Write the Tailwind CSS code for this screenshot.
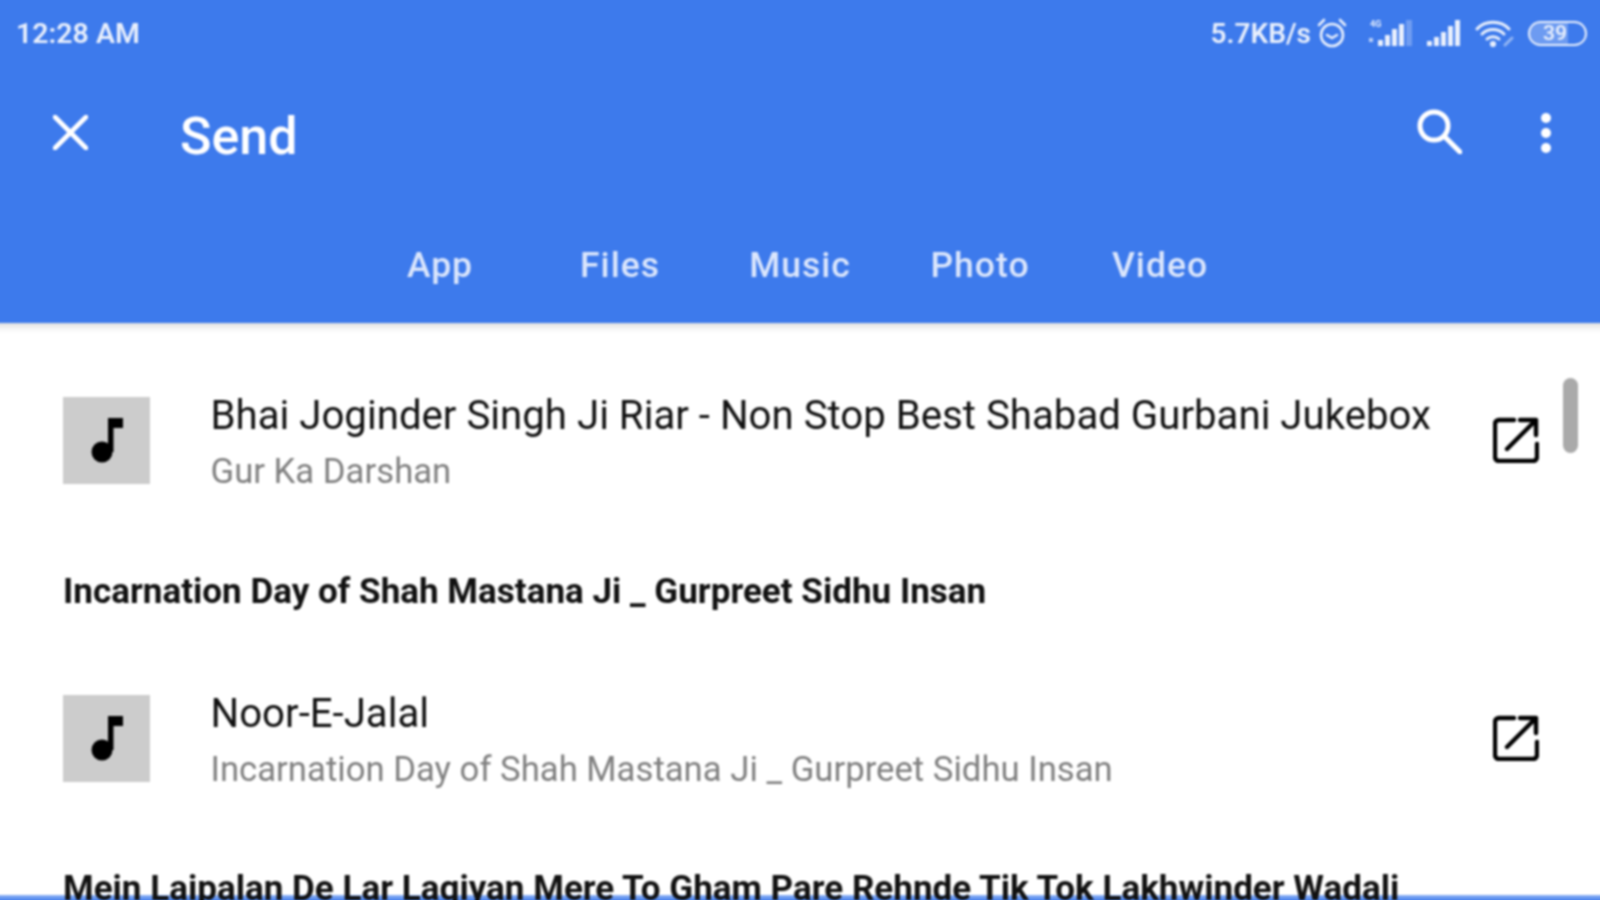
<!DOCTYPE html>
<html><head><meta charset="utf-8"><script src="https://cdn.jsdelivr.net/npm/@tailwindcss/browser@4"></script></head>
<body class="m-0 bg-white">
<div class="w-[1600px] h-[900px] overflow-hidden bg-white">
<div class="relative w-[1640px] h-[940px] -ml-[20px] -mt-[20px] overflow-hidden bg-white font-['Roboto',sans-serif] blur-[0.8px]">
  <div class="absolute left-0 right-0 top-[915px] h-[25px] bg-gradient-to-b from-[#8fb2f4] to-[#3d7aec] to-[25%]"></div>
  <header class="relative z-20 h-[343px] pt-[20px] px-[20px] bg-[#3d7aec] text-white shadow-[0_3px_8px_rgba(0,0,0,0.16)]">
    <div class="h-[66px] flex items-center justify-between pl-4 pr-[13px] pt-[2px] text-[#e8effc]">
      <span class="text-[28.5px] font-semibold">12:28 AM</span>
      <div class="flex items-center">
        <span class="text-[28px] font-semibold mr-[6px]">5.7KB/s</span>
        <svg class="w-[30px] h-[30px] mr-[21px] -mt-[2px]" viewBox="0 0 30 30" fill="none" stroke="currentColor" stroke-width="2.6" stroke-linecap="round"><circle cx="15" cy="17" r="11"/><path d="M10 17l5 3 5-3M2 7l5-5M28 7l-5-5"/></svg>
        <svg class="w-[47px] h-[28px] mr-[11px] -mt-[2px]" viewBox="0 0 47 28"><text x="2" y="8" font-size="9" font-weight="700" fill="currentColor">4G</text><rect x="1" y="19" width="4" height="4" fill="currentColor" opacity=".7"/><rect x="10" y="21" width="5" height="6" fill="currentColor"/><rect x="17" y="16" width="5" height="11" fill="currentColor"/><rect x="24" y="10" width="5" height="17" fill="currentColor"/><rect x="31" y="5" width="5" height="22" fill="currentColor"/><rect x="38" y="1" width="6" height="26" fill="currentColor" opacity=".3"/></svg>
        <svg class="w-[36px] h-[26px] mr-[13px] -mt-[2px]" viewBox="0 0 36 26" fill="currentColor"><path d="M1 21h5v5H1zM8 17h5v9H8zM15 12h5v14h-5zM22 6h5v20h-5zM29 0h5v26h-5z"/></svg>
        <svg class="w-[40px] h-[27px] mr-[13px] -mt-[2px]" viewBox="0 0 40 27" fill="none" stroke="currentColor" stroke-width="3" stroke-linecap="round"><path d="M2 9C10 0 26 0 34 9"/><path d="M7 14c6-6 16-6 22 0"/><path d="M12 19c3-3 9-3 12 0"/><circle cx="18" cy="24" r="1.6" fill="currentColor"/><path d="M30 25l7-7" opacity=".5"/></svg>
        <div class="relative w-[59px] h-[25px] -mt-[2px] rounded-full border-2 border-[#e8effc] flex items-center overflow-hidden">
          <div class="absolute left-0 top-0 bottom-0 w-[38px] bg-white/25"></div>
          <span class="relative pl-[13px] text-[21px] leading-none font-semibold">39</span>
        </div>
      </div>
    </div>
    <div class="h-[138px] flex items-center">
      <svg class="ml-[53px] mb-[5px] w-[35px] h-[35px]" viewBox="0 0 35 35" stroke="white" stroke-width="4.6" stroke-linecap="round"><path d="M2 2l31 31M33 2L2 33"/></svg>
      <span class="ml-[92px] mt-[3px] text-[52px] font-medium leading-none">Send</span>
      <svg class="ml-auto mb-[7px] w-[45px] h-[45px]" viewBox="0 0 45 45" fill="none" stroke="white" stroke-width="5" stroke-linecap="round"><circle cx="17" cy="17" r="14"/><path d="M28 28l15 15"/></svg>
      <div class="ml-[79px] mr-[49px] mb-[4px] flex flex-col gap-[5px]">
        <span class="block w-[10px] h-[10px] rounded-full bg-white"></span>
        <span class="block w-[10px] h-[10px] rounded-full bg-white"></span>
        <span class="block w-[10px] h-[10px] rounded-full bg-white"></span>
      </div>
    </div>
    <nav class="flex justify-center text-[35.5px] font-medium text-[#dbe6fc] tracking-[1px] leading-none pt-[44px]">
      <span class="w-[180px] text-center">App</span>
      <span class="w-[180px] text-center">Files</span>
      <span class="w-[180px] text-center">Music</span>
      <span class="w-[180px] text-center">Photo</span>
      <span class="w-[180px] text-center">Video</span>
    </nav>
  </header>
  <main class="relative z-10 pt-[74px] pl-[83px] text-[#111]">
    <div class="flex items-center h-[87px]">
      <div class="w-[87px] h-[87px] bg-[#cccccc] shrink-0">
        <svg class="w-[87px] h-[87px]" viewBox="0 0 87 87" fill="#000"><circle cx="39" cy="55" r="10.5"/><rect x="45" y="21" width="5.5" height="34"/><rect x="45" y="21" width="15" height="10"/></svg>
      </div>
      <div class="ml-[60.5px] pt-[2px] flex flex-col">
        <span class="text-[40.2px] leading-[46px] whitespace-nowrap">Bhai Joginder Singh Ji Riar - Non Stop Best Shabad Gurbani Jukebox</span>
        <span class="mt-[13px] text-[34.7px] leading-[38px] text-[#808080] whitespace-nowrap">Gur Ka Darshan</span>
      </div>
      <svg class="absolute left-[1513px] -mt-[1px] w-[46px] h-[46px]" viewBox="0 0 46 46" fill="none" stroke="#000" stroke-width="4.4" stroke-linecap="round" stroke-linejoin="round"><path d="M21 3H6a4 4 0 0 0-4 4v33a4 4 0 0 0 4 4h34a4 4 0 0 0 4-4V27"/><path d="M14 32L43 3M27 3h16v15" /></svg>
    </div>
    <h2 class="mt-[88px] h-[40px] text-[35px] tracking-[0.02px] leading-[40px] font-bold text-[#111] whitespace-nowrap">Incarnation Day of Shah Mastana Ji _ Gurpreet Sidhu Insan</h2>
    <div class="mt-[83px] flex items-center h-[87px]">
      <div class="w-[87px] h-[87px] bg-[#cccccc] shrink-0">
        <svg class="w-[87px] h-[87px]" viewBox="0 0 87 87" fill="#000"><circle cx="39" cy="55" r="10.5"/><rect x="45" y="21" width="5.5" height="34"/><rect x="45" y="21" width="15" height="10"/></svg>
      </div>
      <div class="ml-[60.5px] pt-[2px] flex flex-col">
        <span class="text-[40.2px] leading-[46px] whitespace-nowrap">Noor-E-Jalal</span>
        <span class="mt-[13px] text-[34.7px] leading-[38px] text-[#808080] whitespace-nowrap">Incarnation Day of Shah Mastana Ji _ Gurpreet Sidhu Insan</span>
      </div>
      <svg class="absolute left-[1513px] -mt-[1px] w-[46px] h-[46px]" viewBox="0 0 46 46" fill="none" stroke="#000" stroke-width="4.4" stroke-linecap="round" stroke-linejoin="round"><path d="M21 3H6a4 4 0 0 0-4 4v33a4 4 0 0 0 4 4h34a4 4 0 0 0 4-4V27"/><path d="M14 32L43 3M27 3h16v15" /></svg>
    </div>
    <h2 class="mt-[87px] h-[40px] text-[35px] tracking-[0.02px] leading-[40px] font-bold text-[#111] whitespace-nowrap">Mein Laipalan De Lar Lagiyan Mere To Gham Pare Rehnde Tik Tok Lakhwinder Wadali</h2>
  </main>
  <div class="absolute z-20 left-[1583px] top-[398px] w-[15px] h-[75px] rounded-full bg-[#aaaaaa]"></div>
</div>
</div>
</body></html>
